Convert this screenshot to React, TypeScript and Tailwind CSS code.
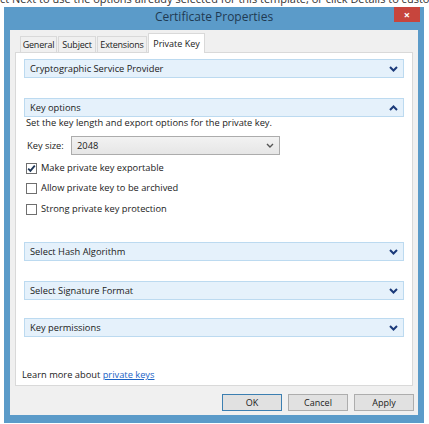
import React from 'react'

const font = { fontFamily: '"Open Sans", "Noto Sans", sans-serif' }

function Chevron({ up = false }: { up?: boolean }) {
  return (
    <svg width="9" height="6" viewBox="0 0 9 6" className="mr-[5px]">
      <path
        d={up ? 'M1 5 L4.5 1.5 L8 5' : 'M1 1 L4.5 4.5 L8 1'}
        fill="none"
        stroke="#1b3a7a"
        strokeWidth="2"
      />
    </svg>
  )
}

function SectionBar({ title, up = false, className = '' }: { title: string; up?: boolean; className?: string }) {
  return (
    <div
      className={`flex h-[19px] items-center justify-between border border-[#bcdaf0] bg-[#e5f1fb] pl-[5px] text-[9.3px] text-[#1a1a1a] ${className}`}
    >
      <span>{title}</span>
      <Chevron up={up} />
    </div>
  )
}

function Check({ checked = false, label }: { checked?: boolean; label: string }) {
  return (
    <div className="flex h-[14px] items-center gap-[4px] pl-[2px] text-[9.3px] text-[#1a1a1a]">
      <div className="flex h-[11px] w-[11px] items-center justify-center border border-[#6f6f6f] bg-white">
        {checked && (
          <svg width="9" height="9" viewBox="0 0 9 9">
            <path d="M1.2 4.6 L3.4 6.8 L7.8 1.6" fill="none" stroke="#1d3556" strokeWidth="1.8" />
          </svg>
        )}
      </div>
      <span>{label}</span>
    </div>
  )
}

function Tab({ label, width, active = false }: { label: string; width: string; active?: boolean }) {
  return (
    <div
      className={
        active
          ? `relative z-10 -mb-px flex h-[20px] items-center justify-center border border-b-0 border-[#d9d9d9] bg-white text-[9px] text-[#1a1a1a] ${width}`
          : `flex h-[16px] items-center justify-center border border-b-0 border-[#d9d9d9] bg-[#f0f0f0] text-[9px] tracking-[-0.2px] text-[#1a1a1a] ${width}`
      }
    >
      {label}
    </div>
  )
}

function Button({ label, focused = false }: { label: string; focused?: boolean }) {
  return (
    <div
      className={`flex h-[17px] w-[60px] items-center justify-center border bg-[#e1e1e1] text-[9px] text-[#1a1a1a] ${
        focused ? 'border-[#3c7fb1]' : 'border-[#adadad]'
      }`}
    >
      {label}
    </div>
  )
}

export default function App() {
  return (
    <div className="relative h-[424px] w-[429px] overflow-hidden bg-white" style={font}>
      <div className="absolute left-[0px] top-[-9px] z-0 whitespace-nowrap text-[11px] leading-[15px] text-[#333]">
        ct Next to use the options already selected for this template, or click Details to customize the certificate
      </div>

      <div className="absolute left-[4px] top-[7px] z-10 flex h-[416px] w-[420px] flex-col bg-[#5b9bc9]">
        <div className="flex h-[23px] items-start">
          <div className="w-[30px]" />
          <div className="flex h-[20px] flex-1 items-center justify-center text-[12px] text-[#1f3a52]">
            Certificate Properties
          </div>
          <div className="mr-[4px] flex h-[15px] w-[26px] items-center justify-center bg-[#c7453d] text-[11px] font-bold leading-none text-white">
            ×
          </div>
        </div>

        <div className="mx-[6px] mb-[8px] flex flex-1 flex-col bg-[#f0f0f0]">
          <div className="flex items-end gap-[1px] pl-[10px] pt-[3px]">
            <Tab label="General" width="w-[37px]" />
            <Tab label="Subject" width="w-[38px]" />
            <Tab label="Extensions" width="w-[50px]" />
            <Tab label="Private Key" width="w-[57px]" active />
          </div>

          <div className="mx-[5px] flex h-[334px] flex-col border border-[#d9d9d9] bg-white px-[8px] pt-[6px] text-[#1a1a1a]">
            <SectionBar title="Cryptographic Service Provider" />
            <SectionBar title="Key options" up className="mt-[20px]" />
            <div className="h-[12px] pl-[2px] text-[9.3px] leading-[12px]">
              Set the key length and export options for the private key.
            </div>
            <div className="mt-[7px] flex items-center pl-[3px] text-[9.3px]">
              <span className="w-[44px]">Key size:</span>
              <div className="flex h-[19px] w-[209px] items-center justify-between border border-[#acacac] bg-gradient-to-b from-[#f2f2f2] to-[#e6e6e6] pl-[5px] pr-[5px]">
                <span>2048</span>
                <svg width="8" height="5" viewBox="0 0 8 5">
                  <path d="M1 1 L4 4 L7 1" fill="none" stroke="#555" strokeWidth="1.4" />
                </svg>
              </div>
            </div>
            <div className="mt-[6px] flex flex-col gap-[6px]">
              <Check checked label="Make private key exportable" />
              <Check label="Allow private key to be archived" />
              <div className="mt-[1px]">
                <Check label="Strong private key protection" />
              </div>
            </div>
            <SectionBar title="Select Hash Algorithm" className="mt-[26px]" />
            <SectionBar title="Select Signature Format" className="mt-[20px]" />
            <SectionBar title="Key permissions" className="mt-[18px]" />
            <div className="mt-auto mb-[3px] -ml-[2px] text-[9.3px]">
              Learn more about <span className="text-[#1a63c6] underline">private keys</span>
            </div>
          </div>

          <div className="mt-[8px] flex justify-end gap-[6px] pr-[4px]">
            <Button label="OK" focused />
            <Button label="Cancel" />
            <Button label="Apply" />
          </div>
        </div>
      </div>
    </div>
  )
}
